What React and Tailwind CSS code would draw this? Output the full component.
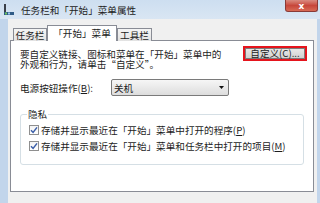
import React from 'react';

const TaskbarIcon = () => (
  <svg width="12" height="11" viewBox="0 0 12 11">
    <rect x="1" y="0" width="2" height="10" fill="#3a3f48" />
    <rect x="1" y="8" width="10" height="3" fill="#2f5b86" />
    <rect x="2" y="8.5" width="2" height="2" fill="#6fc35c" />
    <rect x="5" y="8.5" width="2" height="2" fill="#9ec9ef" />
  </svg>
);

const Check = () => (
  <span className="w-[10px] h-[10px] border border-[#8f8f8f] bg-gradient-to-b from-[#f4f4f4] to-[#ffffff] flex items-center justify-center shrink-0">
    <svg width="8" height="8" viewBox="0 0 8 8">
      <path d="M1 4.2 L3.1 6.4 L7 1.4" fill="none" stroke="#3b5ea8" strokeWidth="1.5" />
    </svg>
  </span>
);

const Tab = ({ label, active, w }) => (
  <div
    className={
      active
        ? 'h-[16px] bg-white border border-b-0 border-[#898c95] flex items-center justify-center pb-[1px]'
        : 'h-[13px] bg-gradient-to-b from-[#f5f5f5] to-[#e2e2e2] border border-b-0 border-[#898c95] flex items-center justify-center'
    }
    style={{ width: w }}
  >
    {label}
  </div>
);

export default function App() {
  return (
    <div className="w-[320px] h-[203px] relative overflow-hidden flex flex-col bg-[#c2d5eb] text-[9.6px] leading-[10px] text-[#1c1c1c] font-['Noto_Sans_CJK_SC',sans-serif]">
      {/* Title bar */}
      <div className="h-[19px] flex items-center pl-[3px] gap-[6px] bg-gradient-to-b from-[#cddef0] to-[#d9e6f3]">
        <TaskbarIcon />
        <span className="text-[#222]">任务栏和「开始」菜单属性</span>
      </div>
      <div className="absolute top-0 right-[2px] w-[33px] h-[12px] rounded-b-[3px] border border-t-0 border-[#8a3a36] bg-gradient-to-b from-[#d98a80] via-[#c7473b] to-[#d86a55] flex items-center justify-center text-white text-[9px] font-bold font-['DejaVu_Sans',sans-serif]">
        x
      </div>

      {/* Client area */}
      <div className="flex-1 flex flex-col ml-[8px] mr-[3px] pl-[2px] pr-[3px] bg-[#f0f0f0]">
        <div className="mt-[6px] h-[16px] flex items-end pl-[3px] -mb-px relative z-10">
          <Tab label="任务栏" w={34} />
          <Tab label="「开始」菜单" active w={70} />
          <Tab label="工具栏" w={35} />
        </div>

        <div className="flex-1 mb-[11px] border border-[#898c95] bg-white flex flex-col">
          {/* Customize row */}
          <div className="flex justify-between items-start pl-[9px] pr-[6px] pt-[5px]">
            <p className="mt-[3px] leading-[10px]">
              要自定义链接、图标和菜单在「开始」菜单中的
              <br />
              外观和行为，请单击“自定义”。
            </p>
            <div className="w-[64px] h-[15px] border-2 border-[#e5141d] flex">
              <div className="flex-1 bg-gradient-to-b from-[#e8e8e8] to-[#d2d2d2] border border-[#7c7c7c] flex items-center justify-center leading-[9px]">
                自定义(C)...
              </div>
            </div>
          </div>

          {/* Power button */}
          <div className="mt-[10px] h-[17px] flex items-center pl-[9px]">
            <span className="w-[91px]">
              电源按钮操作(<u>B</u>):
            </span>
            <div className="w-[118px] h-[17px] rounded-[2px] border border-[#7a7a7a] bg-gradient-to-b from-[#f6f6f6] to-[#dddddd] flex items-center justify-between pl-[2px] pr-[4px]">
              <span>关机</span>
              <svg width="5" height="3" viewBox="0 0 5 3">
                <path d="M0 0 H5 L2.5 3 Z" fill="#111" />
              </svg>
            </div>
          </div>

          {/* Privacy group */}
          <fieldset className="mt-[13px] mx-[9px] border border-[#d5dfe5] rounded-[3px] pl-[8px] pb-[10px]">
            <legend className="ml-[-2px] px-[1px] leading-[10px]">隐私</legend>
            <div className="mt-[3px] h-[16px] flex items-center gap-[2px]">
              <Check />
              <span>
                存储并显示最近在「开始」菜单中打开的程序(<u>P</u>)
              </span>
            </div>
            <div className="h-[16px] flex items-center gap-[2px]">
              <Check />
              <span>
                存储并显示最近在「开始」菜单和任务栏中打开的项目(<u>M</u>)
              </span>
            </div>
          </fieldset>
        </div>
      </div>
    </div>
  );
}
